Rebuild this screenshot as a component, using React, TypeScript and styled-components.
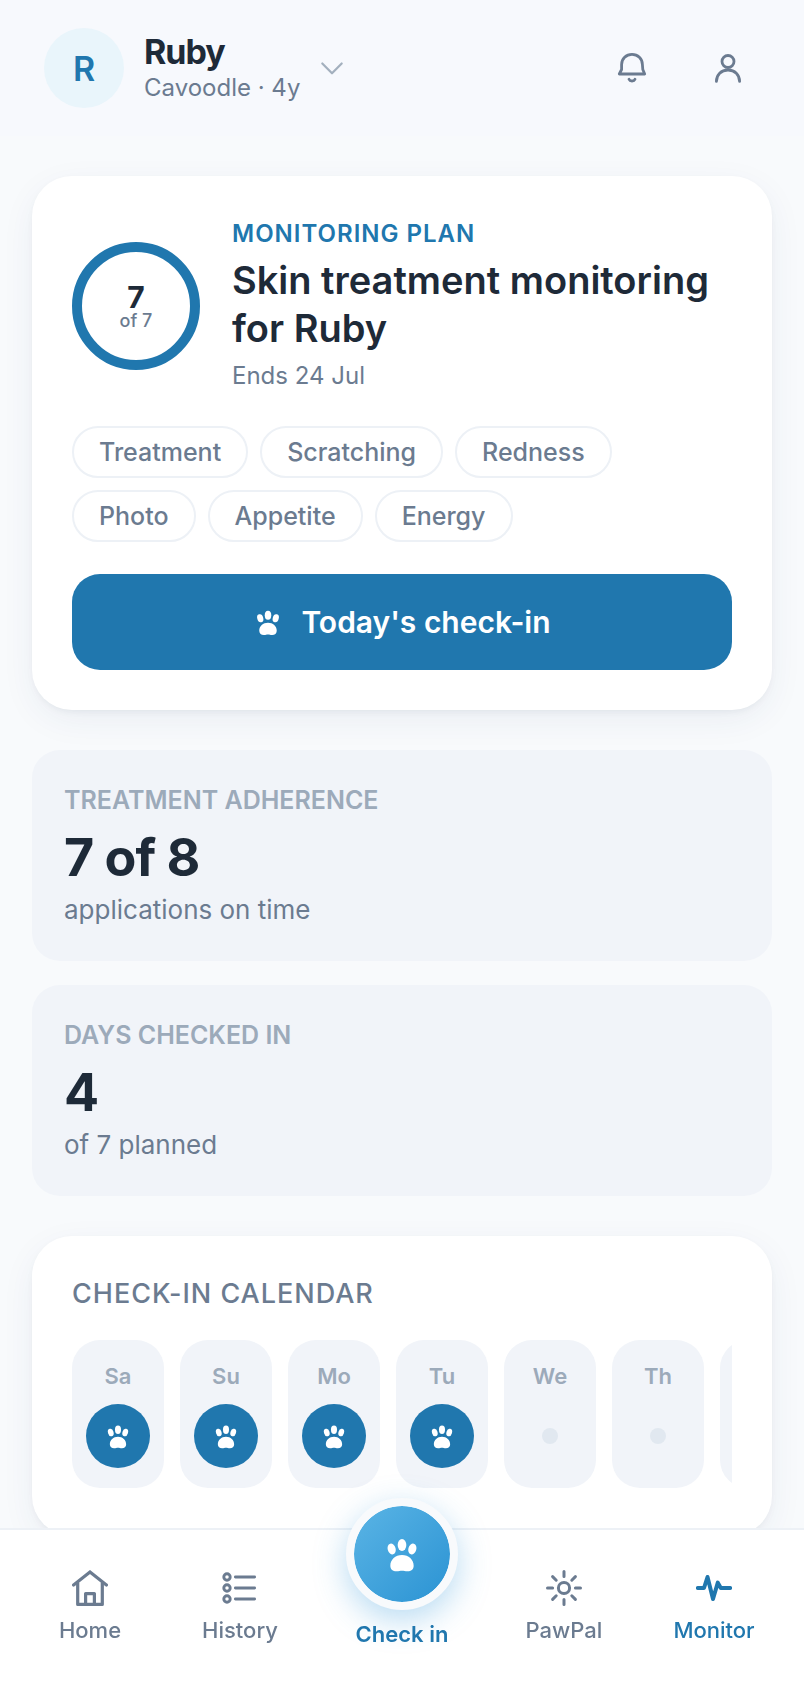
import React from "react";
import styled, { createGlobalStyle, css } from "styled-components";

const color = {
  page: "#f8fafc",
  header: "#f7f9fd",
  surface: "#ffffff",
  muted: "#f1f4f9",
  line: "#edf1f6",
  dot: "#e1e8f0",
  ink: "#1e2a38",
  text: "#6b7b90",
  faint: "#9caaba",
  primary: "#2077ae",
  tint: "#e9f5fb",
};

const GlobalStyle = createGlobalStyle`
  *, *::before, *::after { box-sizing: border-box; }
  body {
    margin: 0;
    background: ${color.page};
    color: ${color.ink};
    font-family: Inter, "Liberation Sans", sans-serif;
  }
  button { font: inherit; color: inherit; border: 0; background: none; padding: 0; cursor: pointer; }
  h1, h2, p, ul { margin: 0; padding: 0; }
  ul { list-style: none; }
  a { color: inherit; text-decoration: none; }
  svg { display: block; flex: none; }
`;

const Shell = styled.div`
  display: flex;
  flex-direction: column;
  min-height: 100vh;
`;

const Header = styled.header`
  display: flex;
  align-items: center;
  justify-content: space-between;
  padding: 28px 32px 28px 44px;
  background: ${color.header};
`;

const PetSwitcher = styled.button`
  display: flex;
  align-items: center;
  gap: 20px;
  text-align: left;
`;

const Avatar = styled.span`
  display: grid;
  place-items: center;
  width: 80px;
  height: 80px;
  border-radius: 50%;
  background: ${color.tint};
  color: ${color.primary};
  font-size: 34px;
  font-weight: 600;
`;

const PetText = styled.span`
  display: flex;
  flex-direction: column;
`;

const PetName = styled.span`
  font-size: 34px;
  font-weight: 700;
  line-height: 40px;
  letter-spacing: -1px;
`;

const PetBreed = styled.span`
  color: ${color.text};
  font-size: 24px;
  line-height: 32px;
`;

const HeaderActions = styled.div`
  display: flex;
  gap: 8px;
`;

const IconButton = styled.button`
  display: grid;
  place-items: center;
  width: 88px;
  height: 80px;
  color: ${color.text};
`;

const Main = styled.main`
  flex: 1;
  display: flex;
  flex-direction: column;
  gap: 40px;
  padding: 40px 32px 140px;
`;

const Card = styled.section`
  padding: 40px;
  border-radius: 40px;
  background: ${color.surface};
  box-shadow: 0 3px 8px -3px rgba(30, 42, 56, 0.08), 0 10px 36px -4px rgba(33, 70, 110, 0.08);
`;

const PlanHead = styled.div`
  display: flex;
  align-items: center;
  gap: 32px;
  margin-bottom: 30px;
`;

const Ring = styled.div`
  display: flex;
  flex: none;
  flex-direction: column;
  align-items: center;
  justify-content: center;
  width: 128px;
  height: 128px;
  border: 10px solid ${color.primary};
  border-radius: 50%;
`;

const RingValue = styled.span`
  font-size: 30px;
  font-weight: 700;
  line-height: 30px;
`;

const RingTotal = styled.span`
  color: ${color.text};
  font-size: 18px;
  font-weight: 500;
  line-height: 18px;
`;

const Eyebrow = styled.p`
  color: ${color.primary};
  font-size: 24px;
  font-weight: 600;
  line-height: 36px;
  letter-spacing: 1px;
  text-transform: uppercase;
`;

const PlanTitle = styled.h1`
  margin: 4px 0;
  font-size: 38px;
  font-weight: 600;
  line-height: 48px;
`;

const PlanEnd = styled.p`
  color: ${color.text};
  font-size: 24px;
  line-height: 40px;
`;

const Chips = styled.ul`
  display: flex;
  flex-wrap: wrap;
  gap: 12px;
  margin-bottom: 32px;
`;

const Chip = styled.li`
  padding: 0 25px;
  border: 2px solid ${color.line};
  border-radius: 26px;
  color: ${color.text};
  font-size: 25px;
  font-weight: 500;
  line-height: 48px;
`;

const PrimaryButton = styled.button`
  display: flex;
  align-items: center;
  justify-content: center;
  gap: 18px;
  width: 100%;
  height: 96px;
  border-radius: 28px;
  background: ${color.primary};
  color: #fff;
  font-size: 30px;
  font-weight: 600;
`;

const Stats = styled.div`
  display: grid;
  gap: 24px;
`;

const Stat = styled.section`
  padding: 32px;
  border-radius: 28px;
  background: ${color.muted};
`;

const StatLabel = styled.h2`
  color: ${color.faint};
  font-size: 25px;
  font-weight: 600;
  line-height: 36px;
  text-transform: uppercase;
`;

const StatValue = styled.p`
  margin-top: 7px;
  font-size: 52px;
  font-weight: 700;
  line-height: 66px;
  letter-spacing: -1px;
`;

const StatNote = styled.p`
  color: ${color.text};
  font-size: 26px;
  line-height: 38px;
`;

const SectionTitle = styled.h2`
  margin-bottom: 28px;
  color: ${color.text};
  font-size: 27px;
  font-weight: 500;
  line-height: 36px;
  letter-spacing: 1px;
  text-transform: uppercase;
`;

const Days = styled.ul`
  display: flex;
  gap: 16px;
  padding-bottom: 8px;
  overflow: hidden;
`;

const Day = styled.li`
  display: flex;
  flex: none;
  flex-direction: column;
  align-items: center;
  gap: 12px;
  width: 92px;
  padding: 20px 0;
  border-radius: 28px;
  background: ${color.muted};
  color: ${color.faint};
  font-size: 22px;
  font-weight: 600;
  line-height: 32px;
`;

const DayMark = styled.span<{ $done: boolean }>`
  display: grid;
  place-items: center;
  width: 64px;
  height: 64px;
  border-radius: 50%;
  color: #fff;
  ${({ $done }) =>
    $done
      ? css`
          background: ${color.primary};
        `
      : css`
          &::before {
            content: "";
            width: 16px;
            height: 16px;
            border-radius: 50%;
            background: ${color.dot};
          }
        `}
`;

const TabBar = styled.nav`
  position: fixed;
  inset: auto 0 0;
  display: grid;
  grid-template-columns: 1fr 1fr 174px 1fr 1fr;
  align-items: start;
  padding: 0 15px 32px;
  border-top: 2px solid ${color.line};
  background: rgba(255, 255, 255, 0.98);
`;

const Tab = styled.a<{ $active?: boolean }>`
  display: flex;
  flex-direction: column;
  align-items: center;
  gap: 8px;
  padding-top: 40px;
  color: ${({ $active }) => ($active ? color.primary : color.text)};
  font-size: 22px;
  font-weight: 500;
  line-height: 32px;
`;

const CheckInTab = styled.a`
  display: flex;
  flex-direction: column;
  align-items: center;
  gap: 8px;
  margin-top: -32px;
  color: ${color.primary};
  font-size: 22px;
  font-weight: 600;
  line-height: 32px;
`;

const CheckInDisc = styled.span`
  display: grid;
  place-items: center;
  width: 112px;
  height: 112px;
  border: 8px solid ${color.page};
  border-radius: 50%;
  background: ${color.page} linear-gradient(135deg, #5ab4e5, #2b93d3) padding-box;
  box-shadow: 0 10px 32px rgba(52, 152, 219, 0.35);
  color: #fff;
`;

const Paw = ({ size }: { size: number }) => (
  <svg width={size} height={size} viewBox="-60 -60 120 120" fill="currentColor" aria-hidden="true">
    <ellipse cx="0" cy="-27" rx="13" ry="18" />
    <ellipse cx="-31" cy="-15" rx="12" ry="16.5" transform="rotate(-16 -31 -15)" />
    <ellipse cx="31" cy="-15" rx="12" ry="16.5" transform="rotate(16 31 -15)" />
    <path d="M0 3C20 3 35 17 35 35C35 46 27 52 17 52C9 52 6 50 0 50C-6 50-9 52-17 52C-27 52-35 46-35 35C-35 17-20 3 0 3Z" />
  </svg>
);

const LineIcon = ({ weight = 3, children }: { weight?: number; children: React.ReactNode }) => (
  <svg
    width="36"
    height="36"
    viewBox="0 0 36 36"
    fill="none"
    stroke="currentColor"
    strokeWidth={weight}
    strokeLinecap="round"
    strokeLinejoin="round"
    aria-hidden="true"
  >
    {children}
  </svg>
);

const Chevron = () => (
  <svg width="24" height="24" viewBox="0 0 24 24" fill="none" stroke="#a3b0be" strokeWidth="2.2" strokeLinecap="round" strokeLinejoin="round" aria-hidden="true">
    <path d="M2.3 7.5L12 17.3L21.7 7.5" />
  </svg>
);

const BellIcon = () => (
  <LineIcon weight={2.8}>
    <path d="M5.3 24L7.6 19.5V14.5C7.6 8.7 12.2 4.3 18 4.3S28.4 8.7 28.4 14.5L28.8 19.5L30.7 24Z" />
    <path d="M15 29.2C16 31.6 20 31.6 21 29.2" />
  </LineIcon>
);

const UserIcon = () => (
  <LineIcon weight={2.8}>
    <circle cx="18" cy="11.5" r="6" />
    <path d="M6.4 31.4C6.4 24.6 11.2 20 18 20S29.6 24.6 29.6 31.4" />
  </LineIcon>
);

const HomeIcon = () => (
  <LineIcon weight={3.2}>
    <path d="M1.6 15L18 2L34.4 15" strokeLinejoin="miter" />
    <path d="M5.7 13V34.4H30.3V13" />
    <path d="M13.6 34V23.6H22.4V34" />
  </LineIcon>
);

const HistoryIcon = () => (
  <LineIcon weight={2.9}>
    <circle cx="5" cy="7" r="3.2" />
    <circle cx="5" cy="18" r="3.2" />
    <circle cx="5" cy="29" r="3.2" />
    <path d="M13.4 7H32.6M13.4 18H32.6M13.4 29H32.6" />
  </LineIcon>
);

const PawPalIcon = () => (
  <LineIcon weight={3}>
    <circle cx="18" cy="18" r="5.6" />
    <path d="M18 1.5V6.6M18 29.4V34.5M1.5 18H6.6M29.4 18H34.5M6.6 6.6L10.2 10.2M25.8 25.8L29.4 29.4M29.4 6.6L25.8 10.2M10.2 25.8L6.6 29.4" />
  </LineIcon>
);

const MonitorIcon = () => (
  <LineIcon weight={4}>
    <path d="M1.9 18H8L11.5 7L17 29L21.8 12.6L24.8 18H34.1" />
  </LineIcon>
);

const chips = ["Treatment", "Scratching", "Redness", "Photo", "Appetite", "Energy"];

const stats = [
  { label: "Treatment adherence", value: "7 of 8", note: "applications on time" },
  { label: "Days checked in", value: "4", note: "of 7 planned" },
];

const days = [
  { name: "Sa", done: true },
  { name: "Su", done: true },
  { name: "Mo", done: true },
  { name: "Tu", done: true },
  { name: "We", done: false },
  { name: "Th", done: false },
  { name: "Fr", done: false },
];

export default function App() {
  return (
    <Shell>
      <GlobalStyle />
      <Header>
        <PetSwitcher type="button">
          <Avatar>R</Avatar>
          <PetText>
            <PetName>Ruby</PetName>
            <PetBreed>Cavoodle · 4y</PetBreed>
          </PetText>
          <Chevron />
        </PetSwitcher>
        <HeaderActions>
          <IconButton type="button" aria-label="Notifications">
            <BellIcon />
          </IconButton>
          <IconButton type="button" aria-label="Profile">
            <UserIcon />
          </IconButton>
        </HeaderActions>
      </Header>

      <Main>
        <Card>
          <PlanHead>
            <Ring>
              <RingValue>7</RingValue>
              <RingTotal>of 7</RingTotal>
            </Ring>
            <div>
              <Eyebrow>Monitoring plan</Eyebrow>
              <PlanTitle>Skin treatment monitoring for Ruby</PlanTitle>
              <PlanEnd>Ends 24 Jul</PlanEnd>
            </div>
          </PlanHead>
          <Chips>
            {chips.map((chip) => (
              <Chip key={chip}>{chip}</Chip>
            ))}
          </Chips>
          <PrimaryButton type="button">
            <Paw size={30} />
            Today's check-in
          </PrimaryButton>
        </Card>

        <Stats>
          {stats.map((stat) => (
            <Stat key={stat.label}>
              <StatLabel>{stat.label}</StatLabel>
              <StatValue>{stat.value}</StatValue>
              <StatNote>{stat.note}</StatNote>
            </Stat>
          ))}
        </Stats>

        <Card>
          <SectionTitle>Check-in calendar</SectionTitle>
          <Days>
            {days.map((day) => (
              <Day key={day.name}>
                {day.name}
                <DayMark $done={day.done}>{day.done && <Paw size={28} />}</DayMark>
              </Day>
            ))}
          </Days>
        </Card>
      </Main>

      <TabBar>
        <Tab href="#home">
          <HomeIcon />
          Home
        </Tab>
        <Tab href="#history">
          <HistoryIcon />
          History
        </Tab>
        <CheckInTab href="#check-in">
          <CheckInDisc>
            <Paw size={40} />
          </CheckInDisc>
          Check in
        </CheckInTab>
        <Tab href="#pawpal">
          <PawPalIcon />
          PawPal
        </Tab>
        <Tab href="#monitor" $active aria-current="page">
          <MonitorIcon />
          Monitor
        </Tab>
      </TabBar>
    </Shell>
  );
}
